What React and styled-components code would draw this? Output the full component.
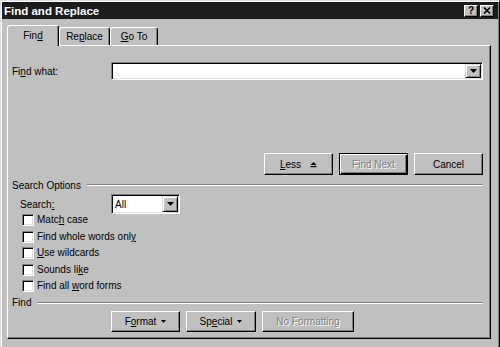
import React from 'react';
import styled, { createGlobalStyle, css } from 'styled-components';

const GlobalStyle = createGlobalStyle`
  html, body {
    margin: 0;
    padding: 0;
    background: #c0c0c0;
    overflow: hidden;
  }
  body {
    font-family: "Liberation Sans", Arial, sans-serif;
    font-size: 10px;
    color: #000;
  }
  * { box-sizing: border-box; }
`;

const raised = css`
  border: 1px solid;
  border-color: #fff #000 #000 #fff;
  box-shadow: inset -1px -1px #808080;
`;

const sunken = css`
  border: 1px solid;
  border-color: #808080 #fff #fff #808080;
  box-shadow: inset 1px 1px #000, inset -1px -1px #dfdfdf;
`;

export default function App() {
  return (
    <>
      <GlobalStyle />
      <Window>
        <TitleBar>
          <Title>Find and Replace</Title>
          <TitleButtons>
            <TitleButton>?</TitleButton>
            <TitleButton $gap>
              <svg width="8" height="7" viewBox="0 0 8 7">
                <path d="M1 0.5 L7 6.5 M7 0.5 L1 6.5" stroke="#000" strokeWidth="1.6" />
              </svg>
            </TitleButton>
          </TitleButtons>
        </TitleBar>

        <Body>
          <Tabs>
            <Tab $active $w={52}>Fin<U>d</U></Tab>
            <Tab $w={51}>Re<U>p</U>lace</Tab>
            <Tab $w={48}><U>G</U>o To</Tab>
          </Tabs>

          <Panel>
            <FieldRow>
              <Label $w={99}>Fi<U>n</U>d what:</Label>
              <Combo>
                <ComboText />
                <DropButton>
                  <DownArrow />
                </DropButton>
              </Combo>
            </FieldRow>

            <ActionRow>
              <Button $w={69} $h={22} $gap={9}>
                <span><U>L</U>ess</span>
                <svg width="7" height="7" viewBox="0 0 7 7">
                  <path d="M0.5 4 L3.5 1 L6.5 4 Z" fill="#000" />
                  <rect x="0.5" y="5" width="6" height="1.2" fill="#000" />
                </svg>
              </Button>
              <Button $w={69} $h={22} $default $disabled>Find Next</Button>
              <Button $w={69} $h={22}>Cancel</Button>
            </ActionRow>

            <SectionHeader $top={4}>
              <span>Search Options</span>
              <Etch />
            </SectionHeader>

            <SearchRow>
              <Label $w={91}>Search<U>:</U></Label>
              <Combo $w={69} $h={20}>
                <ComboText>All</ComboText>
                <DropButton>
                  <DownArrow />
                </DropButton>
              </Combo>
            </SearchRow>

            <CheckList>
              <CheckRow><Box /><span>Matc<U>h</U> case</span></CheckRow>
              <CheckRow><Box /><span>Find whole words onl<U>y</U></span></CheckRow>
              <CheckRow><Box /><span><U>U</U>se wildcards</span></CheckRow>
              <CheckRow><Box /><span>Sounds li<U>k</U>e</span></CheckRow>
              <CheckRow><Box /><span>Find all <U>w</U>ord forms</span></CheckRow>
            </CheckList>

            <SectionHeader $top={0}>
              <span>Find</span>
              <Etch />
            </SectionHeader>

            <BottomRow>
              <Button $w={69} $h={21} $gap={5}>
                <span>F<U>o</U>rmat</span>
                <SmallDown />
              </Button>
              <Button $w={70} $h={21} $gap={5}>
                <span>Sp<U>e</U>cial</span>
                <SmallDown />
              </Button>
              <Button $w={92} $h={21} $disabled>No Formatting</Button>
            </BottomRow>
          </Panel>
        </Body>
      </Window>
    </>
  );
}

function DownArrow() {
  return (
    <svg width="7" height="4" viewBox="0 0 7 4">
      <path d="M0 0 H7 L3.5 4 Z" fill="#000" />
    </svg>
  );
}

function SmallDown() {
  return (
    <svg width="5" height="3" viewBox="0 0 5 3">
      <path d="M0 0 H5 L2.5 3 Z" fill="#000" />
    </svg>
  );
}

const Window = styled.div`
  width: 500px;
  height: 352px;
  background: #c0c0c0;
  border: 1px solid;
  border-color: #dfdfdf #000 #000 #dfdfdf;
  padding: 1px;
  box-shadow: inset 1px 1px #fff, inset -1px -1px #808080;
  display: flex;
  flex-direction: column;
`;

const TitleBar = styled.div`
  height: 17px;
  background: #1c1c1c;
  display: flex;
  align-items: center;
  justify-content: space-between;
  padding: 0 4px 0 2px;
`;

const Title = styled.div`
  color: #fff;
  font-weight: 700;
  font-size: 11.5px;
`;

const TitleButtons = styled.div`
  display: flex;
  align-items: center;
`;

const TitleButton = styled.div`
  width: 14px;
  height: 12px;
  margin-left: ${p => (p.$gap ? 2 : 0)}px;
  background: #c0c0c0;
  ${raised};
  display: flex;
  align-items: center;
  justify-content: center;
  font-weight: 700;
  font-size: 10px;
  line-height: 1;
`;

const Body = styled.div`
  padding: 6px 7px 0 5px;
  display: flex;
  flex-direction: column;
`;

const Tabs = styled.div`
  height: 20px;
  display: flex;
  align-items: flex-end;
`;

const Tab = styled.div`
  width: ${p => p.$w}px;
  height: ${p => (p.$active ? 21 : 18)}px;
  margin-bottom: ${p => (p.$active ? -1 : 0)}px;
  position: relative;
  z-index: ${p => (p.$active ? 1 : 0)};
  background: #c0c0c0;
  border: 1px solid;
  border-bottom: none;
  border-color: #fff #000 transparent #fff;
  border-radius: 3px 3px 0 0;
  box-shadow: inset -1px 0 #808080;
  display: flex;
  align-items: center;
  justify-content: center;
  padding-bottom: ${p => (p.$active ? 2 : 0)}px;
`;

const Panel = styled.div`
  height: 294px;
  ${raised};
  padding: 16px 7px 0 4px;
  display: flex;
  flex-direction: column;
`;

const U = styled.span`
  text-decoration: underline;
  text-underline-offset: 1px;
`;

const FieldRow = styled.div`
  height: 18px;
  display: flex;
  align-items: center;
`;

const Label = styled.div`
  width: ${p => p.$w}px;
  flex: none;
`;

const Combo = styled.div`
  ${p => (p.$w ? `width: ${p.$w}px;` : 'flex: 1;')}
  height: ${p => p.$h || 18}px;
  background: #fff;
  ${sunken};
  padding: 1px;
  display: flex;
  align-items: stretch;
`;

const ComboText = styled.div`
  flex: 1;
  display: flex;
  align-items: center;
  padding-left: 2px;
`;

const DropButton = styled.div`
  width: 16px;
  background: #c0c0c0;
  border: 1px solid;
  border-color: #dfdfdf #000 #000 #dfdfdf;
  box-shadow: inset 1px 1px #fff, inset -1px -1px #808080;
  display: flex;
  align-items: center;
  justify-content: center;
`;

const ActionRow = styled.div`
  margin-top: 73px;
  display: flex;
  justify-content: flex-end;
  gap: 6px;
`;

const Button = styled.div`
  width: ${p => p.$w}px;
  height: ${p => p.$h}px;
  flex: none;
  background: #c0c0c0;
  ${p =>
    p.$default
      ? css`
          border: 1px solid #000;
          box-shadow: inset 1px 1px #fff, inset -1px -1px #000, inset -2px -2px #808080;
        `
      : raised};
  display: flex;
  align-items: center;
  justify-content: center;
  gap: ${p => p.$gap || 0}px;
  color: ${p => (p.$disabled ? '#808080' : '#000')};
  text-shadow: ${p => (p.$disabled ? '1px 1px 0 #fff' : 'none')};
`;

const SectionHeader = styled.div`
  margin-top: ${p => p.$top}px;
  height: 12px;
  display: flex;
  align-items: center;
  gap: 6px;
`;

const Etch = styled.div`
  flex: 1;
  height: 2px;
  border-top: 1px solid #808080;
  border-bottom: 1px solid #fff;
`;

const SearchRow = styled.div`
  margin-top: 3px;
  height: 20px;
  padding-left: 8px;
  display: flex;
  align-items: center;
`;

const CheckList = styled.div`
  padding-left: 10px;
  display: flex;
  flex-direction: column;
`;

const CheckRow = styled.div`
  height: 16.6px;
  display: flex;
  align-items: flex-start;
  gap: 3px;
  line-height: 12px;
`;

const Box = styled.div`
  width: 12px;
  height: 12px;
  flex: none;
  background: #fff;
  ${sunken};
`;

const BottomRow = styled.div`
  margin-top: 2px;
  padding-left: 99px;
  display: flex;
  gap: 6px;
`;
